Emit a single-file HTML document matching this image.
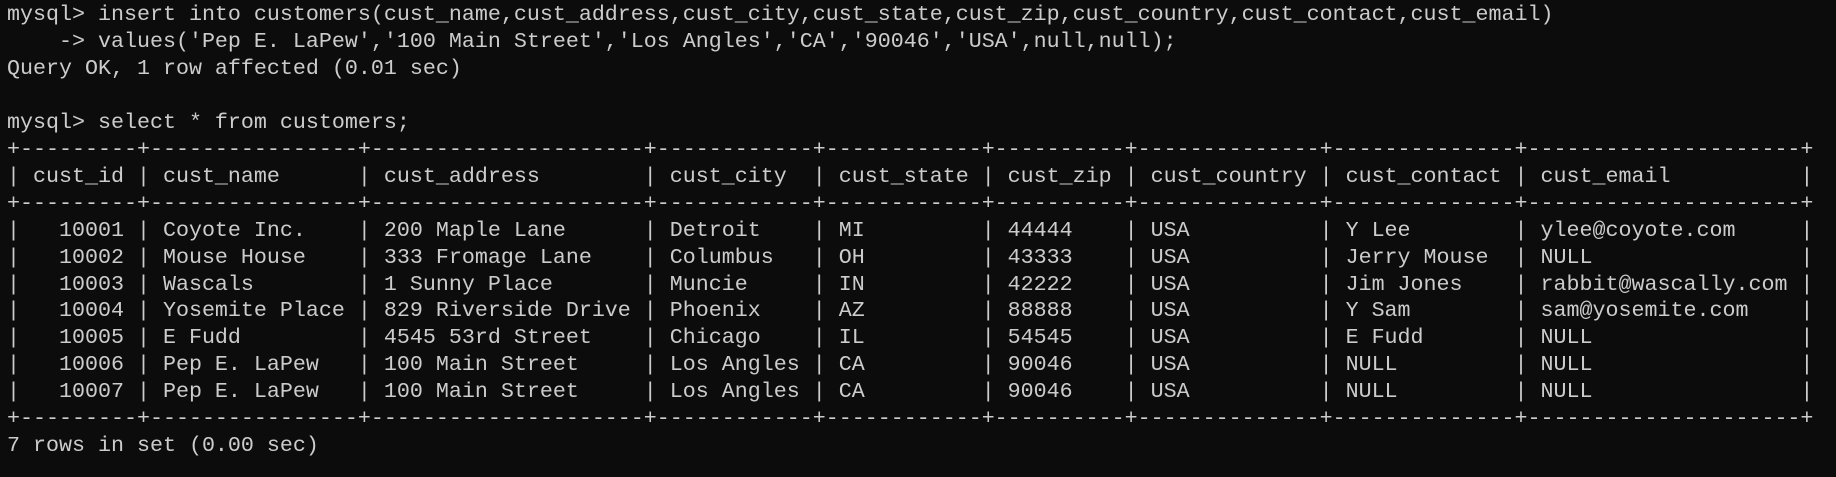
<!DOCTYPE html>
<html><head><meta charset="utf-8"><style>
html,body{margin:0;padding:0;background:#0c0c0c;width:1836px;height:477px;overflow:hidden}
pre{margin:0;position:absolute;left:7px;top:2px;font-family:"Liberation Mono","DejaVu Sans Mono",monospace;font-size:21.667px;line-height:26.95px;color:#cccccc;white-space:pre}
</style></head><body><pre>mysql> insert into customers(cust_name,cust_address,cust_city,cust_state,cust_zip,cust_country,cust_contact,cust_email)
    -> values('Pep E. LaPew','100 Main Street','Los Angles','CA','90046','USA',null,null);
Query OK, 1 row affected (0.01 sec)

mysql> select * from customers;
+---------+----------------+---------------------+------------+------------+----------+--------------+--------------+---------------------+
| cust_id | cust_name      | cust_address        | cust_city  | cust_state | cust_zip | cust_country | cust_contact | cust_email          |
+---------+----------------+---------------------+------------+------------+----------+--------------+--------------+---------------------+
|   10001 | Coyote Inc.    | 200 Maple Lane      | Detroit    | MI         | 44444    | USA          | Y Lee        | ylee@coyote.com     |
|   10002 | Mouse House    | 333 Fromage Lane    | Columbus   | OH         | 43333    | USA          | Jerry Mouse  | NULL                |
|   10003 | Wascals        | 1 Sunny Place       | Muncie     | IN         | 42222    | USA          | Jim Jones    | rabbit@wascally.com |
|   10004 | Yosemite Place | 829 Riverside Drive | Phoenix    | AZ         | 88888    | USA          | Y Sam        | sam@yosemite.com    |
|   10005 | E Fudd         | 4545 53rd Street    | Chicago    | IL         | 54545    | USA          | E Fudd       | NULL                |
|   10006 | Pep E. LaPew   | 100 Main Street     | Los Angles | CA         | 90046    | USA          | NULL         | NULL                |
|   10007 | Pep E. LaPew   | 100 Main Street     | Los Angles | CA         | 90046    | USA          | NULL         | NULL                |
+---------+----------------+---------------------+------------+------------+----------+--------------+--------------+---------------------+
7 rows in set (0.00 sec)
</pre></body></html>
